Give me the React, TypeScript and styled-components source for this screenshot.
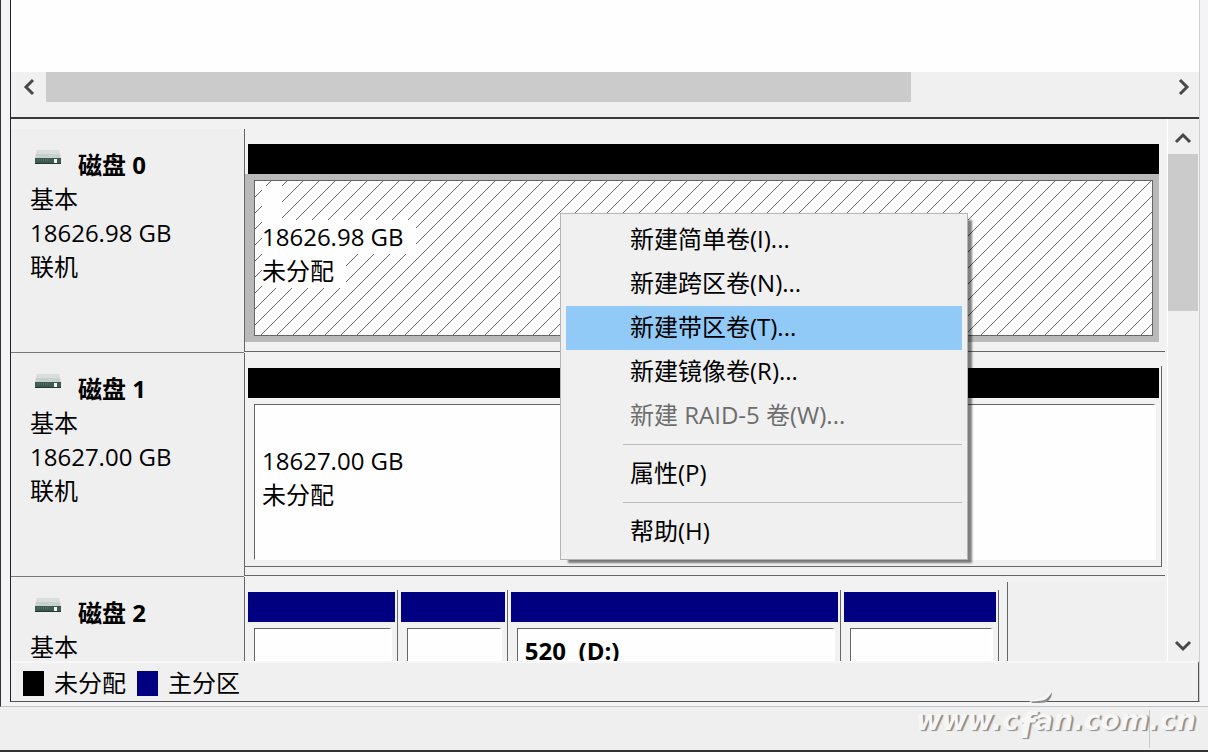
import React from "react";
import styled, { createGlobalStyle } from "styled-components";

const GlobalStyle = createGlobalStyle`
  * { box-sizing: border-box; }
  body {
    margin: 0;
    background: #f0f0f0;
    color: #000;
    font-family: "Open Sans", "Noto Sans CJK SC", sans-serif;
    font-size: 24px;
    line-height: 34px;
  }
  button { font: inherit; color: inherit; border: 0; background: none; padding: 0; }
`;

const Window = styled.div`
  position: relative;
  display: flex;
  flex-direction: column;
  height: 100vh;
  min-width: 900px;
  overflow: hidden;
`;

const Frame = styled.main`
  flex: 1;
  min-height: 0;
  display: flex;
  padding: 0 8px 4px 9px;
  border-left: 1px solid #333;
  border-bottom: 1px solid #c4c4c4;
  background: #f4f4f6;
`;

const Panes = styled.div`
  flex: 1;
  min-width: 0;
  display: flex;
  flex-direction: column;
  border-left: 1px solid #222;
  border-right: 1px solid #cfcfd2;
  border-bottom: 1px solid #555;
  background: #f0f0f0;
`;

const VolumeList = styled.section`
  height: 72px;
  background: #fefefe;
`;

const HorizontalBar = styled.div`
  display: flex;
  height: 30px;
  background: #f0f0f0;
`;

const HorizontalTrack = styled.div`
  flex: 1;
`;

const HorizontalThumb = styled.div`
  width: 77%;
  height: 100%;
  background: #cbcbcb;
`;

const ArrowButton = styled.button<{ $length?: number }>`
  display: flex;
  align-items: center;
  justify-content: center;
  width: ${(p) => p.$length ?? 30}px;
  height: 30px;
`;

const Splitter = styled.div`
  height: 17px;
  border-bottom: 2px solid #3a3a3a;
`;

const DiskArea = styled.section`
  flex: 1;
  min-height: 0;
  display: flex;
`;

const DiskList = styled.div`
  flex: 1;
  min-width: 0;
  overflow: hidden;
  padding-top: 10px;
  background: #f2f2f3;
`;

const DiskRow = styled.article`
  display: flex;
  height: 224px;
`;

const DiskInfo = styled.header`
  width: 233px;
  flex: none;
  padding: 19px 0 0 19px;
  border-bottom: 1px solid #777;
  background: #f0eff0;
`;

const DiskName = styled.h2`
  display: flex;
  gap: 17px;
  margin: 0;
  padding-left: 5px;
  font-size: 24px;
  line-height: 34px;
  font-weight: 700;
`;

const DiskFact = styled.div``;

const DiskGraph = styled.div`
  flex: 1;
  min-width: 0;
  display: flex;
  margin: 0 2px 1px 0;
  padding: 13px 3px 8px 0;
  border-left: 1px solid #666;
  border-bottom: 1px solid #666;
`;

const Volume = styled.div<{ $weight: number; $selected?: boolean }>`
  flex: ${(p) => p.$weight} 0 0;
  min-width: 0;
  display: flex;
  flex-direction: column;
  border-right: 1px solid ${(p) => (p.$selected ? "transparent" : "#666")};
  border-bottom: 1px solid ${(p) => (p.$selected ? "transparent" : "#666")};
`;

const VolumeStripe = styled.div<{ $color: string }>`
  height: 30px;
  margin: 2px 2px 0 3px;
  background: ${(p) => p.$color};
`;

const VolumeBody = styled.div<{ $selected?: boolean }>`
  flex: 1;
  display: flex;
  margin-right: 2px;
  padding: 6px ${(p) => (p.$selected ? 6 : 3)}px 6px 9px;
  background: ${(p) => (p.$selected ? "#b9b9b9" : "transparent")};
`;

const VolumeBox = styled.div<{ $selected?: boolean }>`
  position: relative;
  flex: 1;
  min-width: 0;
  overflow: hidden;
  padding: 5px 0 0 7px;
  border: 1px solid #666;
  ${(p) => !p.$selected && "border-right: 3px solid #fff; border-bottom-color: #fff;"}
  background: #fefefe;
`;

const Hatch = styled.svg`
  position: absolute;
  inset: 0;
  width: 100%;
  height: 100%;
`;

const VolumeText = styled.div<{ $bold?: boolean }>`
  position: relative;
  width: fit-content;
  min-width: 20px;
  height: 34px;
  padding-right: 12px;
  white-space: pre;
  font-weight: ${(p) => (p.$bold ? 700 : 400)};
  background: #fefefe;
`;

const Unused = styled.div`
  flex: 156 0 0;
  margin: -8px -3px -8px 8px;
  border-left: 1px solid #666;
  background: #f0f0f0;
`;

const VerticalBar = styled.div`
  width: 32px;
  display: flex;
  flex-direction: column;
  padding: 5px 0 0 0;
  border-left: 1px solid #fff;
  background: #f0f0f0;
`;

const VerticalTrack = styled.div`
  flex: 1;
  padding-right: 1px;
`;

const VerticalThumb = styled.div`
  height: 33%;
  background: #cbcbcb;
`;

const Legend = styled.footer`
  display: flex;
  align-items: center;
  gap: 11px;
  height: 40px;
  padding: 2px 0 0 12px;
  border-top: 2px solid #f7f7f7;
  border-right: 1px solid #555;
`;

const LegendItem = styled.div`
  display: flex;
  align-items: center;
  gap: 10px;
`;

const Swatch = styled.span<{ $color: string }>`
  width: 21px;
  height: 25px;
  background: ${(p) => p.$color};
`;

const StatusBar = styled.footer`
  display: flex;
  justify-content: flex-end;
  height: 45px;
  padding: 3px 58px 2px 0;
  border-bottom: 2px solid #333;
  background: #efefef;
`;

const StatusDivider = styled.div`
  width: 1px;
  background: #c8c8c8;
`;

const Menu = styled.div`
  position: absolute;
  left: 560px;
  top: 213px;
  width: 408px;
  padding: 4px 5px 5px;
  border: 1px solid #b4b4b4;
  background: #f0f0f0;
  box-shadow: 6px 5px 2px -2px rgba(0, 0, 0, 0.5);
`;

const MenuItem = styled.button<{ $active?: boolean }>`
  display: block;
  width: 100%;
  height: 44px;
  padding: 0 0 2px 64px;
  text-align: left;
  background: ${(p) => (p.$active ? "#91c9f7" : "transparent")};
  &:disabled { color: #6d6d6d; }
`;

const MenuLine = styled.hr`
  height: 1px;
  margin: 6px 0 7px 57px;
  border: 0;
  background: #bcbcbc;
`;

const Watermark = styled.div`
  position: absolute;
  right: 12px;
  bottom: 14px;
  color: #f6f6f6;
  font-family: "DejaVu Sans", sans-serif;
  font-size: 28px;
  font-style: italic;
  font-weight: 700;
  text-shadow: 2px 1px 1px #8c8c8c;
`;

const TallLetter = styled.span`
  font-size: 36px;
  line-height: 1px;
  vertical-align: -8px;
`;

const Swoosh = styled.svg`
  position: absolute;
  right: 140px;
  bottom: 32px;
`;

const ARROWS = {
  left: "M19 8 L12 15 L19 22",
  right: "M11 8 L18 15 L11 22",
  up: "M8 18 L15 11 L22 18",
  down: "M8 11 L15 18 L22 11",
};

function Arrow({ to }: { to: keyof typeof ARROWS }) {
  return (
    <svg width="30" height="30" viewBox="0 0 30 30" aria-hidden="true">
      <path d={ARROWS[to]} fill="none" stroke="#484848" strokeWidth="3" />
    </svg>
  );
}

function DriveIcon() {
  return (
    <svg width="26" height="28" viewBox="0 0 26 28" aria-hidden="true">
      <path d="M2 2 H24 L26 10 H0 Z" fill="#c8d1cd" />
      <path d="M2 2 H24 L25 6 H1 Z" fill="#d8dedb" />
      <rect y="10" width="26" height="6" fill="#3c5a50" />
      <path d="M2 12 H16" stroke="#688278" strokeWidth="1" strokeDasharray="1 1" />
      <rect y="15" width="26" height="1" fill="#213b33" />
      <rect x="19" y="11" width="3" height="4" fill="#eef6ef" />
    </svg>
  );
}

type VolumeData = { weight: number; lines: string[]; bold?: boolean };
type DiskData = {
  name: string;
  facts: string[];
  color: string;
  selected?: boolean;
  unused?: boolean;
  volumes: VolumeData[];
};

const disks: DiskData[] = [
  {
    name: "磁盘 0",
    facts: ["基本", "18626.98 GB", "联机"],
    color: "#000",
    selected: true,
    volumes: [{ weight: 1, lines: ["", "18626.98 GB", "未分配"] }],
  },
  {
    name: "磁盘 1",
    facts: ["基本", "18627.00 GB", "联机"],
    color: "#000",
    volumes: [{ weight: 1, lines: ["", "18627.00 GB", "未分配"] }],
  },
  {
    name: "磁盘 2",
    facts: ["基本"],
    color: "#000080",
    unused: true,
    volumes: [
      { weight: 151, lines: [] },
      { weight: 109, lines: [] },
      { weight: 331, lines: ["520  (D:)"], bold: true },
      { weight: 157, lines: [] },
    ],
  },
];

function Disk({ disk }: { disk: DiskData }) {
  return (
    <DiskRow>
      <DiskInfo>
        <DiskName>
          <DriveIcon />
          {disk.name}
        </DiskName>
        {disk.facts.map((fact) => (
          <DiskFact key={fact}>{fact}</DiskFact>
        ))}
      </DiskInfo>
      <DiskGraph>
        {disk.volumes.map((volume, i) => (
          <Volume key={i} $weight={volume.weight} $selected={disk.selected}>
            <VolumeStripe $color={disk.color} />
            <VolumeBody $selected={disk.selected}>
              <VolumeBox $selected={disk.selected}>
                {disk.selected && (
                  <Hatch aria-hidden="true">
                    <defs>
                      <pattern id="hatch" width="16" height="16" patternUnits="userSpaceOnUse">
                        <path d="M-1 17 L17 -1" stroke="#666" strokeWidth="1" />
                      </pattern>
                    </defs>
                    <rect width="100%" height="100%" fill="url(#hatch)" />
                  </Hatch>
                )}
                {volume.lines.map((line, n) => (
                  <VolumeText key={n} $bold={volume.bold}>{line}</VolumeText>
                ))}
              </VolumeBox>
            </VolumeBody>
          </Volume>
        ))}
        {disk.unused && <Unused />}
      </DiskGraph>
    </DiskRow>
  );
}

export default function App() {
  return (
    <Window>
      <GlobalStyle />
      <Frame>
        <Panes>
          <VolumeList />
          <HorizontalBar>
            <ArrowButton $length={35} aria-label="向左滚动"><Arrow to="left" /></ArrowButton>
            <HorizontalTrack><HorizontalThumb /></HorizontalTrack>
            <ArrowButton aria-label="向右滚动"><Arrow to="right" /></ArrowButton>
          </HorizontalBar>
          <Splitter />
          <DiskArea>
            <DiskList>
              {disks.map((disk) => (
                <Disk key={disk.name} disk={disk} />
              ))}
            </DiskList>
            <VerticalBar>
              <ArrowButton aria-label="向上滚动"><Arrow to="up" /></ArrowButton>
              <VerticalTrack><VerticalThumb /></VerticalTrack>
              <ArrowButton aria-label="向下滚动"><Arrow to="down" /></ArrowButton>
            </VerticalBar>
          </DiskArea>
          <Legend>
            <LegendItem><Swatch $color="#000" />未分配</LegendItem>
            <LegendItem><Swatch $color="#000080" />主分区</LegendItem>
          </Legend>
        </Panes>
      </Frame>
      <StatusBar><StatusDivider /></StatusBar>
      <Menu role="menu">
        <MenuItem role="menuitem">新建简单卷(I)...</MenuItem>
        <MenuItem role="menuitem">新建跨区卷(N)...</MenuItem>
        <MenuItem role="menuitem" $active>新建带区卷(T)...</MenuItem>
        <MenuItem role="menuitem">新建镜像卷(R)...</MenuItem>
        <MenuItem role="menuitem" disabled>新建 RAID-5 卷(W)...</MenuItem>
        <MenuLine />
        <MenuItem role="menuitem">属性(P)</MenuItem>
        <MenuLine />
        <MenuItem role="menuitem">帮助(H)</MenuItem>
      </Menu>
      <Watermark>
        www.c<TallLetter>f</TallLetter>an.com.cn
        <Swoosh width="28" height="16" viewBox="0 0 28 16" aria-hidden="true">
          <path d="M3 13 C10 8 20 11 24 2 C24 10 19 13 12 13 Z" fill="#8c8c8c" />
          <path d="M1 12 C8 7 18 10 22 1 C22 8 17 11 10 11 Z" fill="#f6f6f6" />
        </Swoosh>
      </Watermark>
    </Window>
  );
}
